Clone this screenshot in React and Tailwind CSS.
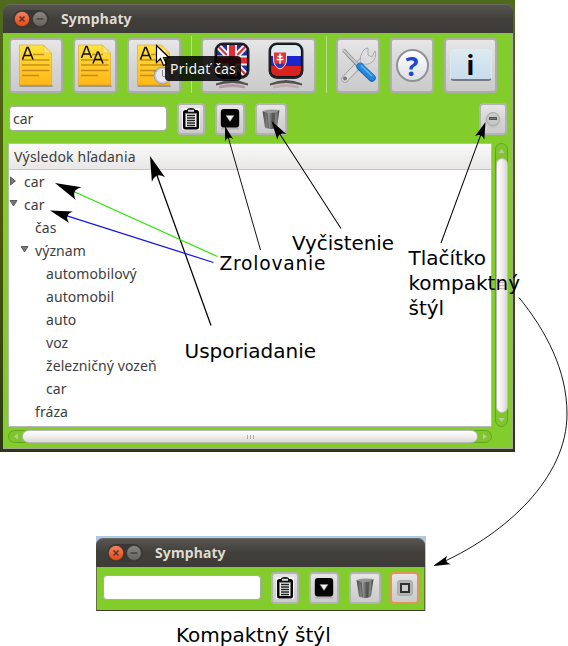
import React from "react";

const UI = "font-['Noto_Sans','Open_Sans',sans-serif]";

function TitleBar({ className = "" }) {
  return (
    <div className={`flex h-[29px] shrink-0 items-center rounded-t-[7px] border-t border-[#6b6961] bg-linear-to-b from-[#56554f] via-[#403f3a] to-[#3c3b37] ${className}`}>
      <svg width="36" height="20" viewBox="0 0 36 20">
        <rect x="0" y="1" width="36" height="18" rx="9" fill="#393833" />
        <circle cx="9" cy="10" r="7.6" fill="url(#close)" stroke="#35332f" strokeWidth=".6" />
        <path d="M6.5 7.5l5 5m0-5l-5 5" stroke="#613021" strokeWidth="1.5" />
        <circle cx="27" cy="10" r="7.4" fill="url(#mini)" stroke="#32312d" strokeWidth=".6" />
        <path d="M23.5 10h7" stroke="#3c3b37" strokeWidth="1.3" />
      </svg>
      <span className={`ml-[12px] text-[14px] leading-5 font-bold tracking-[0.12px] text-[#dfdbd2] ${UI}`}>Symphaty</span>
    </div>
  );
}

function Btn({ className = "", children }) {
  return (
    <div className={`flex shrink-0 items-center justify-center overflow-hidden rounded-[4px] border-2 bg-linear-to-b from-[#e6e6e6] via-[#d6d6d6] to-[#cbcbcb] ${className}`}>
      {children}
    </div>
  );
}

function Note({ kind }) {
  return (
    <svg width="36" height="44" viewBox="0 0 36 44" className="shrink-0">
      <path d="M1.500 43h33" stroke="#89837b" strokeWidth="1.4" />
      <path d="M1.500 2h24l8 8v32H1.500z" fill="url(#note)" stroke="#d9a424" strokeWidth=".6" />
      <path d="M25 2l8.500 9q-3-2-7.500-1 .5-5-1-8z" fill="#ffe88a" stroke="#e9b93b" strokeWidth=".6" />
      <path d="M15 11.500h11M4 17h27.500M4 22h27.500M4 27.500h27.500M4 32.500h17" stroke="#ad6c12" strokeWidth="1.5" opacity=".65" />
      {kind === "two" ? (
        <g fill="none" stroke="#111" strokeWidth="1.5">
          <path d="M4.500 15L9 3.500h1L14.500 15M6.500 11h6.500M16 20.500L20.500 9h1L26 20.500M18 16.500h6.500" />
        </g>
      ) : (
        <path d="M4.500 16.500L9 4.500h1.200L15 16.500M6 12.500h7.500" fill="none" stroke="#111" strokeWidth="1.6" />
      )}
      {kind === "clock" && (
        <g>
          <circle cx="26.500" cy="32.500" r="8.500" fill="#c8c9cf" stroke="#9b9ca4" />
          <circle cx="26.500" cy="32.500" r="6.500" fill="#e9eaf0" />
          <path d="M17.500 28h3M26.500 27v6l5 2" stroke="#85868e" fill="none" />
        </g>
      )}
    </svg>
  );
}

function Flag({ country }) {
  return (
    <svg width="38" height="50" viewBox="0 0 38 50">
      <path d="M3 43.500q16-7 32 0v2q-16-5-32 0z" fill="#333" opacity=".8" />
      <path d="M6 46q13-4 26 0v2.500q-13-3-26 0z" fill={country === "sk" ? "#b99" : "#a9778c"} opacity=".6" />
      <rect x="1.500" y="2.500" width="35" height="36.500" rx="8.500" fill="#24262b" />
      <clipPath id={`clip-${country}`}><rect x="4" y="5" width="30" height="31" rx="5" /></clipPath>
      <g clipPath={`url(#clip-${country})`}>
        {country === "sk" ? (
          <>
            <path d="M4 5h30v11H4z" fill="#e0ebf1" />
            <path d="M4 16h30v10H4z" fill="#1c24cd" />
            <path d="M4 26h30v11H4z" fill="#db231d" />
            <path d="M6.500 12h13v9q-1 6-6.500 8-5.500-2-6.500-8z" fill="#dc3a38" stroke="#e4e4ea" strokeWidth="1" />
            <path d="M13 13.500v11M10.500 16.500h5M9.500 19.500h7" stroke="#fff" strokeWidth="1.500" />
            <path d="M8.500 25q2-3 4.500-1 2.500-2 4.500 1-2 2.500-4.500 3.200-2.500-.7-4.500-3.200z" fill="#2835b5" />
          </>
        ) : (
          <>
            <path d="M4 5h30v31H4z" fill="#242f95" />
            <path d="M4 5l30 31M34 5L4 36" stroke="#edf1f5" strokeWidth="6" />
            <path d="M4 5l30 31M34 5L4 36" stroke="#df3240" strokeWidth="2.200" />
            <path d="M19 5v31M4 20.500h30" stroke="#f0f2f5" strokeWidth="10" />
            <path d="M19 5v31M4 20.500h30" stroke="#e12a32" strokeWidth="6" />
          </>
        )}
      </g>
      <rect x="3.500" y="4.500" width="31" height="32" rx="6" fill="none" stroke="#111316" strokeWidth="1.200" />
    </svg>
  );
}

function Tools() {
  return (
    <svg width="38" height="40" viewBox="0 0 38 40" className="shrink-0">
      <path d="M6 34L25 14" stroke="#98989a" strokeWidth="7" strokeLinecap="round" />
      <path d="M6 34L25 14" stroke="#dadadc" strokeWidth="5.600" strokeLinecap="round" />
      <path d="M22 18q-2-7 2-12 2-3 5-3v7l4 2 3-6q2 7-3 11-5 4-11 1z" fill="#dedee1" stroke="#9c9c9f" strokeWidth=".8" />
      <path d="M23 17l4-4" stroke="#dadadc" strokeWidth="4" />
      <circle cx="6" cy="33.500" r="1.900" fill="#777" />
      <path d="M4.500 5L20 21.500" stroke="#828282" strokeWidth="3.500" />
      <path d="M3.500 4L20 21" stroke="#cacaca" strokeWidth="2.200" />
      <path d="M21 21.500L33 33" stroke="#1764ac" strokeWidth="7.500" strokeLinecap="round" />
      <path d="M21 21L33 32.500" stroke="#2287df" strokeWidth="6" strokeLinecap="round" />
      <path d="M22 20.500L33 31" stroke="#6bb4ef" strokeWidth="1.500" />
    </svg>
  );
}

function Clipboard() {
  return (
    <svg width="18" height="24" viewBox="0 0 18 24" className="shrink-0">
      <path d="M0 1h18v22H0z" fill="#f4f4f4" />
      <path d="M5 3q0-2 4-2t4 2h1.500Q17 3 17 5.500V20q0 2.500-2.500 2.500h-11Q1 22.500 1 20V5.500Q1 3 3.500 3z" fill="#080808" />
      <path d="M3.500 6h11v14h-11z" fill="#eee" />
      <path d="M4 3.500h10v3H4z" fill="#111" />
      <path d="M6 2.800h6v2H6z" fill="#ddd" />
      <path d="M5 8.500h8M5 11h8M5 13.500h8M5 16h8M5 18.500h8" stroke="#222" strokeWidth="1.300" />
    </svg>
  );
}

function DropIcon() {
  return (
    <svg width="20" height="24" viewBox="0 0 20 24" className="shrink-0">
      <path d="M1 21.500h18" stroke="#999" strokeWidth="2" opacity=".5" />
      <rect x=".8" y="2" width="18.400" height="18.500" rx="3" fill="#050505" />
      <path d="M6 8.500h8L10 14.500z" fill="#eee" stroke="#888" strokeWidth=".5" />
    </svg>
  );
}

function Trash() {
  return (
    <svg width="20" height="24" viewBox="0 0 20 24" className="shrink-0">
      <path d="M1.500 4L4 20.500q6 3 12 0L18.500 3q-3 2-8.500 2.200T1.500 4z" fill="url(#bin)" />
      <path d="M6 6l1.500 15M13.500 6l-1 15" stroke="#3d3d3d" strokeWidth="1.300" opacity=".5" />
      <path d="M1.500 4q3-1.500 8.500-1.500T18.500 3q-3 3-8.500 2.900T1.500 4z" fill="#969696" />
    </svg>
  );
}

function Arrow({ x1, y1, x2, y2, color = "#000", len, half, width = 1 }) {
  const angle = (Math.atan2(y2 - y1, x2 - x1) * 180) / Math.PI;
  const dist = Math.hypot(x2 - x1, y2 - y1);
  return (
    <g transform={`translate(${x2} ${y2}) rotate(${angle})`}>
      <path d={`M${-dist} 0H${-len * 0.7}`} stroke={color} strokeWidth={width} />
      <path d={`M0 0L${-len} ${-half}Q${-len * 0.66} 0 ${-len} ${half}z`} fill="#000" />
    </g>
  );
}

const rows = [
  ["car", "closed", 0],
  ["car", "open", 0],
  ["čas", "", 1],
  ["význam", "open", 1],
  ["automobilový", "", 2],
  ["automobil", "", 2],
  ["auto", "", 2],
  ["voz", "", 2],
  ["železničný vozeň", "", 2],
  ["car", "", 2],
  ["fráza", "", 1],
];
const indents = ["pl-0", "pl-[11px]", "pl-[22px]"];

function Row({ text, state, depth }) {
  return (
    <div className={`flex h-[23px] shrink-0 items-center ${indents[depth]}`}>
      <svg width="15" height="14" viewBox="0 0 15 14" className="shrink-0">
        {state === "closed" && <path d="M1.500 2v8L6.500 6z" fill="#777" stroke="#484848" strokeWidth=".8" />}
        {state === "open" && <path d="M1 2.500h7L4.500 8z" fill="#777" stroke="#484848" strokeWidth=".8" />}
      </svg>
      <span className="whitespace-nowrap">{text}</span>
    </div>
  );
}

export default function App() {
  return (
    <div className="relative flex h-[646px] w-[568px] flex-col items-start overflow-hidden bg-white">
      <svg width="0" height="0" className="absolute">
        <defs>
          <linearGradient id="close" x2="0" y2="1"><stop stopColor="#f58462" /><stop offset="1" stopColor="#df4915" /></linearGradient>
          <linearGradient id="mini" x2="0" y2="1"><stop stopColor="#8a8880" /><stop offset="1" stopColor="#64635d" /></linearGradient>
          <linearGradient id="note" x2="0" y2="1"><stop stopColor="#ffe43a" /><stop offset="1" stopColor="#ffb619" /></linearGradient>
          <linearGradient id="bin"><stop stopColor="#444" /><stop offset=".35" stopColor="#999" /><stop offset=".6" stopColor="#555" /><stop offset=".8" stopColor="#888" /><stop offset="1" stopColor="#3c3c3c" /></linearGradient>
        </defs>
      </svg>

      <div className="flex h-[452px] w-[515px] shrink-0 flex-col bg-linear-to-b from-[#4e6b1c] via-[#4b5708] to-[#2c3815] pt-[4px] pr-[2px] pb-[3px] pl-[3px]">
        <TitleBar className="pl-[10px]" />
        <div className="flex min-h-0 flex-1 flex-col border-x border-b border-[#a3a89a] bg-[#82cd2c]">
          <div className="flex h-[66px] shrink-0 items-start pt-[5px] pl-[5px]">
            <Btn className="h-[54.500px] w-[54px] border-[#adadad]"><Note kind="one" /></Btn>
            <Btn className="ml-[10px] h-[54.500px] w-[44px] border-[#adadad]"><Note kind="two" /></Btn>
            <Btn className="ml-[10px] h-[54.500px] w-[54px] border-[#adadad]"><Note kind="clock" /></Btn>
            <div className="mt-[-2px] ml-[10px] h-[57px] w-px bg-[#b9df8b]" />
            <Btn className="ml-[9px] h-[54.500px] w-[115px] gap-[16px] border-[#adadad]"><Flag country="uk" /><Flag country="sk" /></Btn>
            <div className="mt-[-2px] ml-[10px] h-[57px] w-px bg-[#b9df8b]" />
            <Btn className="ml-[9px] h-[54.500px] w-[44px] border-[#adadad]"><Tools /></Btn>
            <Btn className="ml-[10px] h-[54.500px] w-[44px] border-[#adadad]">
              <div className="flex size-[33px] shrink-0 items-center justify-center rounded-full border-2 border-[#909297] bg-linear-to-b from-white to-[#dedfe6] font-['Noto_Sans',sans-serif] text-[27px] leading-none font-bold text-[#1a48ce]">?</div>
            </Btn>
            <Btn className="ml-[10px] h-[54.500px] w-[53px] border-[#adadad]">
              <div className="flex h-[32px] w-[42px] shrink-0 items-center justify-center rounded-[4px] border border-b-2 border-[#dceaf1] border-b-[#747b82] bg-linear-to-b from-[#dcebf1] to-[#c8dced] font-['Noto_Sans',sans-serif] text-[26px] leading-none font-bold text-black">i</div>
            </Btn>
          </div>

          <div className="flex h-[44px] shrink-0 items-start pt-[4px] pl-[5px]">
            <div className={`mt-[3px] flex h-[25px] w-[158px] items-center rounded-[4px] border border-[#a9aaa6] bg-white pl-[3px] text-[14px] text-[#404040] ${UI}`}>car</div>
            <Btn className="ml-[10px] h-[31.500px] w-[27.500px] border-[#b3b3b3]"><Clipboard /></Btn>
            <Btn className="ml-[10px] h-[31.500px] w-[30px] border-[#b3b3b3]"><DropIcon /></Btn>
            <Btn className="ml-[10px] h-[31.500px] w-[32px] border-[#b3b3b3]"><Trash /></Btn>
            <Btn className="mr-[5px] ml-auto h-[31.500px] w-[28px] border-[#b3b3b3]">
              <div className="flex size-[14px] items-center justify-center rounded-full border border-[#aaa] bg-[#c8c8c8] shadow-sm"><div className="h-[3px] w-[8px] border border-[#555] bg-[#777]" /></div>
            </Btn>
          </div>

          <div className="flex h-[284px] shrink-0 pl-[4px]">
            <div className={`flex w-[484px] flex-col overflow-hidden border border-[#b8b9b5] bg-white text-[14px] leading-[20px] tracking-[0.08px] text-[#3e3e3e] ${UI}`}>
              <div className="flex h-[26px] shrink-0 items-center border-b border-[#c8c6c3] bg-linear-to-b from-[#fafafa] to-[#e8e7e5] pl-[5px] text-[14px] tracking-[0.18px]">Výsledok hľadania</div>
              {rows.map(([text, state, depth], i) => <Row key={i} text={text} state={state} depth={depth} />)}
            </div>
            <div className="ml-[3px] flex w-[13px] flex-col items-center justify-between rounded-full border border-[#62a51d] bg-[#7fc52e]">
              <svg width="11" height="14" viewBox="0 0 11 14" className="shrink-0"><path d="M2.500 9h6l-3-4z" fill="#b9c9a9" /></svg>
              <div className="flex w-[12px] flex-1 flex-col items-center justify-center gap-[2px] rounded-full border border-[#bcbcb6] bg-linear-to-r from-white via-[#f1f0ef] to-[#d8d6d3]">
                <div className="h-px w-[6px] bg-[#bbb]" /><div className="h-px w-[6px] bg-[#bbb]" /><div className="h-px w-[6px] bg-[#bbb]" />
              </div>
              <svg width="11" height="13" viewBox="0 0 11 13" className="shrink-0"><path d="M2.500 5h6l-3 4z" fill="#b9c9a9" /></svg>
            </div>
          </div>

          <div className="mt-[3px] ml-[4px] flex h-[13px] w-[484px] shrink-0 items-center rounded-full border border-[#62a51d] bg-[#7fc52e]">
            <svg width="13" height="11" viewBox="0 0 13 11" className="shrink-0"><path d="M9 2.500v6l-4-3z" fill="#b9c9a9" /></svg>
            <div className="flex h-[13px] flex-1 items-center justify-center gap-[2px] rounded-full border border-[#b9bbb2] bg-linear-to-b from-white via-[#f0efee] to-[#dcdad7]">
              <div className="h-[4px] w-px bg-[#aaa]" /><div className="h-[4px] w-px bg-[#aaa]" /><div className="h-[4px] w-px bg-[#aaa]" />
            </div>
            <svg width="13" height="11" viewBox="0 0 13 11" className="shrink-0"><path d="M5 2.500v6l4-3z" fill="#b9c9a9" /></svg>
          </div>
        </div>
      </div>

      <div className="mt-[84px] ml-[96px] flex h-[75px] w-[330px] shrink-0 flex-col bg-[#afc9e5] pt-[2px] pr-px">
        <TitleBar className="pl-[11px]" />
        <div className="flex flex-1 items-start border-x border-b border-[#67713f] border-b-[#403e29] bg-[#82cd2c] pt-[5px] pl-[6px]">
          <div className="mt-[3px] h-[25px] w-[158px] rounded-[4px] border border-[#a9aaa6] bg-white" />
          <Btn className="ml-[10px] h-[32px] w-[28px] border-[#b3b3b3]"><Clipboard /></Btn>
          <Btn className="ml-[10px] h-[32px] w-[30px] border-[#b3b3b3]"><DropIcon /></Btn>
          <Btn className="ml-[10px] h-[32px] w-[32px] border-[#b3b3b3]"><Trash /></Btn>
          <Btn className="ml-[9px] h-[32px] w-[29px] border-[#e39258]">
            <div className="flex size-[16px] items-center justify-center rounded-[3px] border border-[#aaa] bg-[#b5b5b5]"><div className="size-[10px] border-2 border-[#303030] bg-[#ccc]" /></div>
          </Btn>
        </div>
      </div>

      <svg className="absolute top-0 left-0" width="568" height="646" viewBox="0 0 568 646" fill="none">
        <Arrow x1={211} y1={325.500} x2={150} y2={156} len={25} half={7} width={1.250} />
        <Arrow x1={217.500} y1={256.500} x2={55} y2={183} color="#2be400" len={26} half={7} width={1.250} />
        <Arrow x1={213.500} y1={262.500} x2={50} y2={210.500} color="#1515e6" len={22} half={6} width={1.250} />
        <Arrow x1={260.500} y1={250} x2={225} y2={126} len={15} half={4.300} width={0.850} />
        <Arrow x1={341} y1={228.500} x2={271.500} y2={121} len={19} half={5.300} />
        <Arrow x1={441} y1={243} x2={485.500} y2={122} len={17} half={5} />
        <path d="M519 297.500C546 331 567 370 567 414C567 478 506 533 443 562" stroke="#000" strokeWidth=".9" />
        <Arrow x1={445} y1={561.500} x2={433} y2={566} len={17} half={4.500} />
        <path d="M156.500 45.500v17l4-4 3 7 3-1.500-3-6.500h5.500z" fill="white" stroke="black" strokeWidth="1.200" />
      </svg>

      <div className={`absolute top-[56px] left-[165px] flex h-[25px] w-[76px] items-center justify-center rounded-[4px] bg-black/85 text-[14px] tracking-[0.15px] whitespace-nowrap text-[#f2f2f2] ${UI}`}>Pridať čas</div>

      <div className="absolute top-[252px] left-[219.500px] font-['DejaVu_Sans',sans-serif] text-[18.700px] leading-[24px] tracking-[0.75px] text-black">Zrolovanie</div>
      <div className="absolute top-[232px] left-[292px] font-['DejaVu_Sans',sans-serif] text-[19.900px] leading-[24px] text-black">Vyčistenie</div>
      <div className="absolute top-[339px] left-[184.500px] font-['DejaVu_Sans',sans-serif] text-[20px] leading-[24px] text-black">Usporiadanie</div>
      <div className="absolute top-[246px] left-[408.500px] font-['DejaVu_Sans',sans-serif] text-[20px] leading-[25px] text-black">Tlačítko<br />kompaktný<br />štýl</div>
      <div className="absolute top-[623px] left-[176px] font-['DejaVu_Sans',sans-serif] text-[20px] leading-[24px] whitespace-nowrap text-black">Kompaktný štýl</div>
    </div>
  );
}
